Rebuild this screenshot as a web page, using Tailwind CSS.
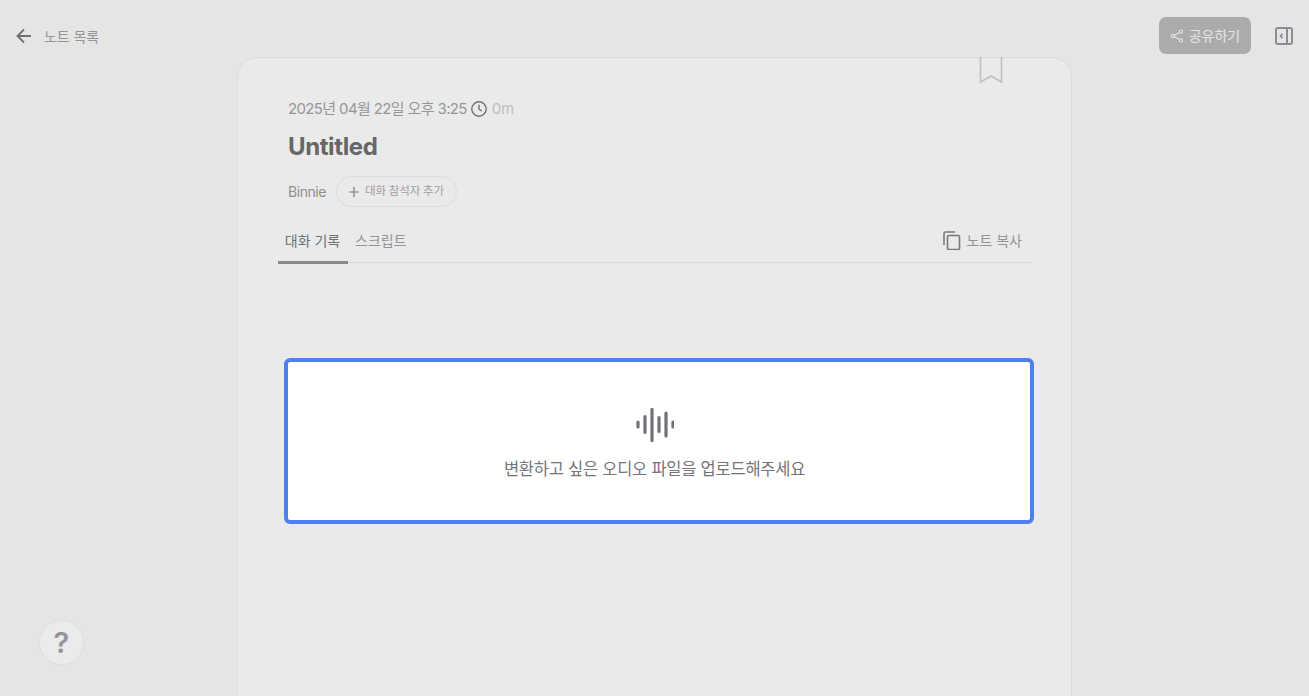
<!DOCTYPE html>
<html lang="ko">
<head>
<meta charset="utf-8">
<script src="https://cdn.jsdelivr.net/npm/@tailwindcss/browser@4"></script>
<title>Untitled</title>
</head>
<body class="relative h-[696px] w-[1309px] overflow-hidden bg-[#e5e5e5] font-['Inter','Noto_Sans_CJK_KR',sans-serif]">
  <header class="flex h-[57px] items-start justify-between pl-[15px] pr-[16px]">
    <a class="mt-[27px] flex h-[18px] items-center gap-[11px] text-[14px] tracking-[-0.1px] text-[#949494]">
      <svg class="h-[18px] w-[18px]" viewBox="0 0 18 18" fill="none" stroke="#707070" stroke-width="1.8"><path d="M16 9H2.500M9 2.500 2.500 9 9 15.500"/></svg>
      <span>노트 목록</span>
    </a>
    <div class="mt-[17px] flex items-center gap-[24px]">
      <button class="flex h-[37px] w-[92px] items-center justify-center gap-[5px] rounded-[7px] bg-[#ababab] text-[14px] text-[#e5e5e5]">
        <svg class="h-[14px] w-[14px]" viewBox="0 0 14 14" fill="none" stroke="#e5e5e5" stroke-width="1.100"><circle cx="2.800" cy="7" r="1.600"/><circle cx="11" cy="2.600" r="1.600"/><circle cx="11" cy="11.400" r="1.600"/><path d="M4.200 6.200 9.600 3.400M4.200 7.800l5.400 2.800"/></svg>
        <span>공유하기</span>
      </button>
      <svg class="h-[18px] w-[18px]" viewBox="0 0 18 18" fill="none" stroke="#8c8c94" stroke-width="2"><rect x="1" y="1" width="16" height="16" rx="2"/><path d="M12 1v16"/><path d="M7.500 6.800 5.600 9l1.900 2.200" stroke-width="1.800"/></svg>
    </div>
  </header>

  <main class="relative mx-auto h-[660px] w-[835px] rounded-t-[20px] border border-[#dcdcdc] bg-[#eaeaea] pl-[40px] pr-[39px]">
    <svg class="absolute right-[68px] top-[-1px] h-[27px] w-[24px]" viewBox="0 0 24 27" fill="none" stroke="#c0c0c4" stroke-width="1.600"><path d="M1.500 0v25L12 19l10.500 6V0"/></svg>
    <div class="pl-[10px] pt-[42px]">
      <div class="flex h-[18px] items-center text-[15px] leading-[18px] tracking-[-0.63px] text-[#969696]">
        <span>2025년 04월 22일 오후 3:25</span>
        <svg class="ml-[4px] h-[16px] w-[16px]" viewBox="0 0 16 16" fill="none" stroke="#717171" stroke-width="1.400"><circle cx="8" cy="8" r="7.200"/><path d="M8 3.800V8.300l2.800 1.600"/></svg>
        <span class="ml-[5px] tracking-[-0.2px] text-[#bdbdbd]">0m</span>
      </div>
      <h1 class="mt-[14px] text-[24px] font-bold leading-[30px] tracking-[-0.4px] text-[#666666]">Untitled</h1>
      <div class="mt-[14px] flex items-center gap-[10px]">
        <span class="text-[14px] tracking-[-0.45px] text-[#8f8f8f]">Binnie</span>
        <button class="flex h-[31px] w-[121px] items-center justify-center gap-[6px] rounded-full border border-[#dcdcdc] text-[11.5px] tracking-[-0.2px] text-[#a0a0a4]">
          <svg class="h-[10px] w-[10px]" viewBox="0 0 10 10" stroke="#7a7a7a" stroke-width="1.200"><path d="M5 0v10M0 5h10"/></svg>
          <span>대화 참석자 추가</span>
        </button>
      </div>
    </div>
    <nav class="mt-[15px] flex h-[41px] items-center border-b border-[#d9d9d9]">
      <div class="relative flex h-[41px] w-[70px] items-center justify-center text-[14px] text-[#707070]">
        <span class="pb-[4px] pr-[1px]">대화 기록</span>
        <span class="absolute inset-x-0 bottom-[-1px] h-[3px] bg-[#8a8a8a]"></span>
      </div>
      <span class="ml-[7px] pb-[4px] text-[14px] text-[#949494]">스크립트</span>
      <div class="ml-auto flex items-center gap-[6px] pb-[3px] pr-[10px] text-[14px] text-[#949494]">
        <svg class="h-[19px] w-[18px]" viewBox="0 0 18 19" fill="none" stroke="#7a7a7a" stroke-width="1.600"><path d="M1 14V2.500A1.500 1.500 0 0 1 2.500 1H12"/><rect x="4.500" y="4.500" width="12" height="14" rx="1.200"/></svg>
        <span>노트 복사</span>
      </div>
    </nav>
    <section class="ml-[6px] mt-[95px] flex h-[166px] w-[750px] flex-col items-center rounded-[6px] border-[4px] border-[#5080ef] bg-white pt-[46px]">
      <svg class="ml-[-8px] h-[34px] w-[38px]" viewBox="0 0 38 34" stroke="#717178" stroke-linecap="round" fill="none"><path d="M2 14v5M9 8.500v16M16 1.500v31M23 9.500v14M30 5v23M37 14v5" stroke-width="3.200"/></svg>
      <p class="ml-[-9px] mt-[15px] text-[16.5px] leading-[24px] tracking-[-0.25px] text-[#74747a]">변환하고 싶은 오디오 파일을 업로드해주세요</p>
    </section>
  </main>

  <button class="absolute left-[39px] top-[620px] flex h-[45px] w-[45px] items-center justify-center rounded-full border border-[#dedede] bg-[#ebebeb] text-[29px] font-semibold text-[#94949a]">?</button>
</body>
</html>
